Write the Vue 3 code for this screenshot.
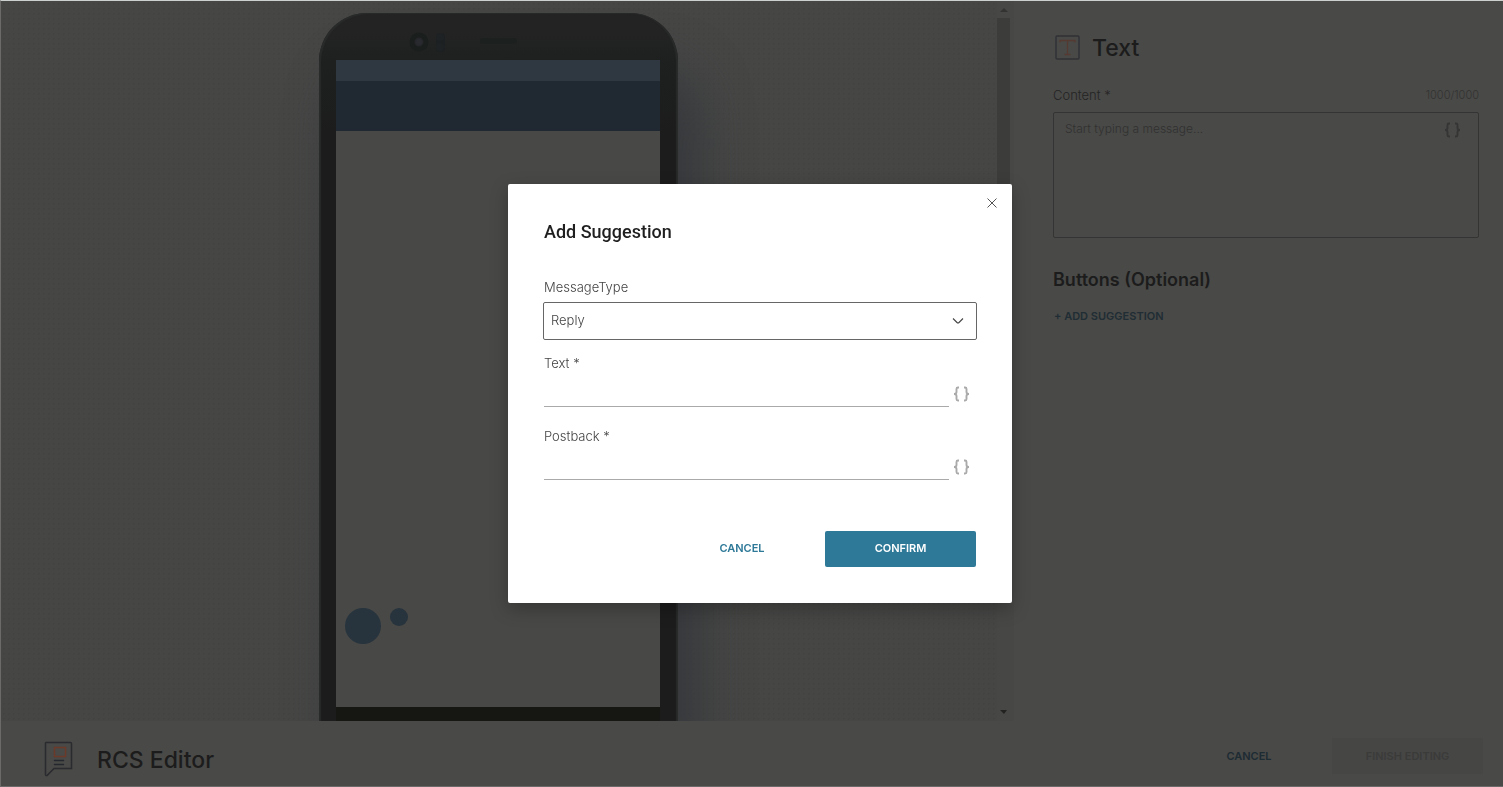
<script setup>
import { ref } from 'vue'

const content = ref('')
const messageType = ref('Reply')
const fields = ref([
  { id: 'suggestion-text', label: 'Text *', value: '' },
  { id: 'suggestion-postback', label: 'Postback *', value: '' }
])
</script>

<template>
  <div class="page">
    <div class="workspace">
      <main class="canvas">
        <div class="stage">
          <div class="phone">
            <div class="phone-top">
              <svg width="358" height="47" viewBox="0 0 358 47" aria-hidden="true">
                <circle cx="100" cy="29" r="7" fill="#252629" stroke="#1a1e1d" stroke-width="5" />
                <circle cx="100" cy="29" r="3" fill="#292a30" />
                <rect x="117" y="20" width="9" height="19" rx="4" fill="#1d2022" />
                <circle cx="121" cy="24" r="4" fill="#1f2224" />
                <circle cx="121" cy="34" r="4" fill="#1f2224" />
                <rect x="161" y="25" width="37" height="6" rx="3" fill="#1c201f" />
              </svg>
            </div>
            <div class="screen">
              <div class="status-bar"></div>
              <div class="chat-header"></div>
              <div class="chat-body">
                <span class="dot large"></span>
                <span class="dot small"></span>
              </div>
              <div class="nav-bar"></div>
            </div>
          </div>
        </div>
        <div class="scrollbar" aria-hidden="true">
          <svg width="17" height="17" viewBox="0 0 17 17"><path d="M3 11l4-4 4 4z" fill="#333332" /></svg>
          <div class="thumb"></div>
          <svg width="17" height="17" viewBox="0 0 17 17"><path d="M3 6h7l-3 4z" fill="#222221" /></svg>
        </div>
      </main>

      <aside class="panel">
        <h2 class="panel-title">
          <svg width="26" height="26" viewBox="0 0 26 26" fill="none" aria-hidden="true">
            <rect x="1" y="1" width="23" height="23" rx="1" stroke="#303135" stroke-width="1.400" />
            <path d="M5 7.500V5.500h15V7.500M12.500 5.500v14M9.500 19.500h6" stroke="#553a32" stroke-width="1.300" />
          </svg>
          Text
        </h2>
        <div class="content-label">
          <label for="content">Content *</label>
          <span class="counter">1000/1000</span>
        </div>
        <div class="editor">
          <textarea id="content" v-model="content" placeholder="Start typing a message..."></textarea>
          <button class="braces" type="button" aria-label="Insert variable">
            <svg width="18" height="16" viewBox="0 0 18 16" fill="none" stroke="currentColor" stroke-width="1.900" aria-hidden="true">
              <path d="M6 1.500H5Q3.500 1.500 3.500 3V6Q3.500 8 1 8Q3.500 8 3.500 10V13Q3.500 14.500 5 14.500H6M11 1.500H12Q13.500 1.500 13.500 3V6Q13.500 8 16 8Q13.500 8 13.500 10V13Q13.500 14.500 12 14.500H11" />
            </svg>
          </button>
        </div>
        <h3 class="section-title">Buttons (Optional)</h3>
        <button class="add" type="button">+ ADD SUGGESTION</button>
      </aside>
    </div>

    <footer class="footer">
      <svg width="29" height="36" viewBox="0 0 29 36" fill="none" aria-hidden="true">
        <path d="M2 1.500H26.500Q27.500 1.500 27.500 2.500V27.500H10L3 34.500Q1.500 35 1.500 33.500V2Z" stroke="#292b2f" stroke-width="1.500" />
        <rect x="10.500" y="6.500" width="11" height="9" stroke="#6b3a2b" stroke-width="1.500" />
        <path d="M10.500 19.500h9M10.500 23.500h9" stroke="#24282e" stroke-width="1.500" stroke-linecap="round" />
      </svg>
      <h1>RCS Editor</h1>
      <button class="btn text" type="button">CANCEL</button>
      <button class="btn finish" type="button" disabled>FINISH EDITING</button>
    </footer>

    <div class="overlay">
      <form class="dialog" role="dialog" aria-modal="true" aria-labelledby="dialog-title" @submit.prevent>
        <button class="close" type="button" aria-label="Close">
          <svg width="12" height="12" viewBox="0 0 12 12" fill="none" stroke="#555" stroke-width="1" aria-hidden="true">
            <path d="M1.500 1.500l9 9M10.500 1.500l-9 9" />
          </svg>
        </button>
        <h2 id="dialog-title">Add Suggestion</h2>
        <label class="label" for="message-type">MessageType</label>
        <div class="select">
          <select id="message-type" v-model="messageType">
            <option>Reply</option>
          </select>
          <svg width="12" height="8" viewBox="0 0 12 8" fill="none" stroke="#444" stroke-width="1.100" aria-hidden="true">
            <path d="M1 1.500L5 5.500Q6 6.500 7 5.500L11 1.500" />
          </svg>
        </div>
        <div v-for="field in fields" :key="field.id" class="field">
          <label class="label" :for="field.id">{{ field.label }}</label>
          <div class="field-row">
            <input :id="field.id" v-model="field.value" type="text" />
            <button class="braces" type="button" aria-label="Insert variable">
              <svg width="18" height="16" viewBox="0 0 18 16" fill="none" stroke="currentColor" stroke-width="1.900" aria-hidden="true">
                <path d="M6 1.500H5Q3.500 1.500 3.500 3V6Q3.500 8 1 8Q3.500 8 3.500 10V13Q3.500 14.500 5 14.500H6M11 1.500H12Q13.500 1.500 13.500 3V6Q13.500 8 16 8Q13.500 8 13.500 10V13Q13.500 14.500 12 14.500H11" />
              </svg>
            </button>
          </div>
        </div>
        <div class="actions">
          <button class="btn cancel" type="button">CANCEL</button>
          <button class="btn confirm" type="submit">CONFIRM</button>
        </div>
      </form>
    </div>
  </div>
</template>

<style>
body {
  margin: 0;
}
</style>

<style scoped>
* {
  box-sizing: border-box;
}
h1, h2, h3 {
  margin: 0;
  font-weight: 500;
}
button, input, select, textarea {
  font-family: inherit;
  font-weight: inherit;
  margin: 0;
  padding: 0;
  border: 0;
  background: none;
}
svg {
  display: block;
  flex: none;
}
.page {
  display: flex;
  flex-direction: column;
  height: 100vh;
  border: solid #6c6a69;
  border-width: 1px 0 1px 1px;
  border-top-color: #ccd0cf;
  background: #494947;
  color: #1c1c1c;
  font-family: Inter, "Liberation Sans", sans-serif;
  font-size: 13px;
  font-weight: 300;
}
.workspace {
  display: flex;
  flex: 1;
  min-height: 0;
}
.canvas {
  display: flex;
  flex: 1;
  background-color: #464645;
  background-image: radial-gradient(circle, #434342 1px, transparent 1px);
  background-size: 5px 5px;
}
.stage {
  display: flex;
  flex: 1;
  justify-content: center;
  padding: 12px 1px 0 0;
  overflow: hidden;
}
.phone {
  display: flex;
  flex-direction: column;
  width: 359px;
  border-radius: 48px 48px 0 0;
  background: linear-gradient(#232323, #232323 20px, #1d201f 50px, #1c1c1c 120px);
  box-shadow: inset 2px 1px 1px #292a2a, inset -2px 0 1px #292a2a, 20px 55px 50px #35383c;
}
.phone-top {
  height: 47px;
}
.screen {
  display: flex;
  flex: 1;
  flex-direction: column;
  margin: 0 18px 0 17px;
}
.status-bar {
  height: 21px;
  background: #2f3840;
}
.chat-header {
  height: 50px;
  background: #202931;
}
.chat-body {
  display: flex;
  flex: 1;
  align-items: flex-end;
  gap: 9px;
  padding: 0 9px 63px;
  background: #484846;
}
.dot {
  border-radius: 50%;
  background: #27343d;
}
.dot.large {
  width: 36px;
  height: 36px;
}
.dot.small {
  width: 18px;
  height: 18px;
  margin-bottom: 18px;
}
.nav-bar {
  height: 14px;
  background: #161613;
}
.scrollbar {
  display: flex;
  flex-direction: column;
  justify-content: space-between;
  width: 17px;
  background: #474746;
}
.thumb {
  flex: 1;
  width: 13px;
  margin-bottom: 240px;
  background: #3c3c3b;
}
.panel {
  width: 489px;
  padding: 33px 24px 0 39px;
}
.panel-title {
  display: flex;
  align-items: center;
  gap: 11px;
  height: 28px;
  padding-left: 2px;
  font-size: 23px;
}
.content-label {
  display: flex;
  align-items: center;
  justify-content: space-between;
  height: 18px;
  margin: 24px 0 8px;
  color: #242424;
}
.counter {
  color: #333332;
  font-size: 11px;
}
.editor {
  display: flex;
  align-items: flex-start;
  height: 126px;
  padding: 8px 16px 0 11px;
  border: 1px solid #343434;
  border-radius: 2px;
}
textarea {
  flex: 1;
  height: 112px;
  color: #292929;
  font-size: 12px;
  line-height: 16px;
  resize: none;
}
textarea::placeholder {
  color: #313131;
}
.editor .braces {
  margin-top: 1px;
  color: #353535;
}
.section-title {
  margin-top: 30px;
  font-size: 18px;
  font-weight: 600;
  line-height: 24px;
}
.add {
  margin-top: 16px;
  padding-left: 1px;
  color: #202d34;
  font-size: 11px;
  font-weight: 600;
  line-height: 16px;
}
.footer {
  display: flex;
  align-items: flex-start;
  height: 65px;
  padding: 20px 20px 0 43px;
}
h1 {
  flex: 1;
  margin-left: 24px;
  font-size: 23px;
  line-height: 38px;
}
.btn {
  height: 36px;
  border-radius: 2px;
  font-size: 11px;
  font-weight: 600;
}
.footer .btn {
  margin-top: -3px;
}
.text {
  width: 100px;
  margin-right: 33px;
  color: #1d2b33;
}
.finish {
  width: 151px;
  background: #464645;
  color: #3b3b3a;
}
.overlay {
  position: fixed;
  inset: 0;
  display: flex;
  align-items: center;
  justify-content: center;
  padding-left: 17px;
}
.dialog {
  position: relative;
  width: 504px;
  padding: 36px;
  border-radius: 2px;
  background: #fff;
  color: #666;
  box-shadow: 0 6px 18px rgba(0, 0, 0, 0.25);
}
.close {
  position: absolute;
  top: 13px;
  right: 14px;
}
.dialog h2 {
  margin-bottom: 31px;
  color: #1f1f1f;
  font-family: Roboto, sans-serif;
  font-size: 18px;
  line-height: 24px;
}
.label {
  display: block;
  color: #444;
  line-height: 24px;
}
.select {
  position: relative;
  margin: 3px -1px 11px;
}
select {
  display: block;
  width: 100%;
  height: 38px;
  padding: 0 7px 2px;
  border: 1px solid #666;
  border-radius: 2px;
  appearance: none;
  color: #444;
  font-size: 13px;
}
.select svg {
  position: absolute;
  top: 15px;
  right: 13px;
  pointer-events: none;
}
.field {
  margin-bottom: 17px;
}
.field-row {
  display: flex;
  align-items: center;
  gap: 4px;
}
.field-row input {
  flex: 1;
  min-width: 0;
  height: 32px;
  border-bottom: 1px solid #aaa;
}
.field-row .braces {
  margin: 5px 5px 0 0;
  color: #aaa;
}
.actions {
  display: flex;
  justify-content: flex-end;
  gap: 33px;
  margin-top: 51px;
}
.actions .btn {
  padding-bottom: 2px;
}
.cancel {
  width: 100px;
  color: #2e7998;
}
.confirm {
  width: 151px;
  background: #2e7998;
  color: #fff;
}
</style>
